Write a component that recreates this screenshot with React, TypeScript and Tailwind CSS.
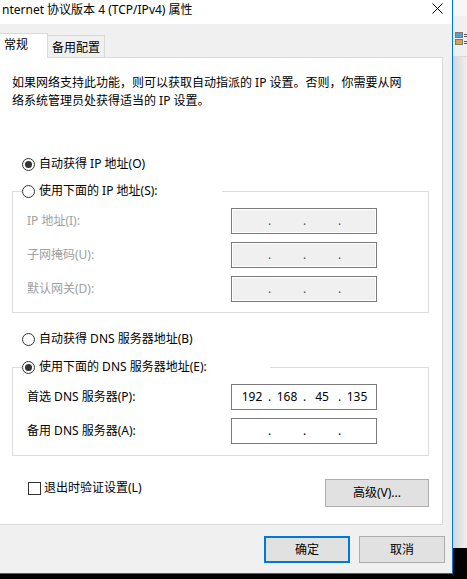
import React from 'react';

type RadioProps = { checked?: boolean; label: string };

function Radio({ checked, label }: RadioProps) {
  return (
    <span className="flex items-center h-4 leading-4">
      <span className="flex items-center justify-center w-[13px] h-[13px] shrink-0 rounded-full border border-[#333333] bg-white">
        {checked && <span className="w-[7px] h-[7px] rounded-full bg-[#333333]" />}
      </span>
      <span className="ml-1 whitespace-nowrap">{label}</span>
    </span>
  );
}

function IpBox({ parts, disabled }: { parts?: string[]; disabled?: boolean }) {
  const segs = parts ?? ['', '', '', ''];
  return (
    <div
      className={
        disabled
          ? 'flex items-center w-[146px] h-[26px] pl-[4px] border border-[#7a7a7a] bg-[#f0f0f0] shadow-[inset_0_0_0_1px_#ffffff] text-[#555555]'
          : 'flex items-center w-[146px] h-[26px] pl-[4px] border border-[#7a7a7a] bg-white text-black'
      }
    >
      {segs.map((s, i) => (
        <React.Fragment key={i}>
          {i > 0 && <span className="flex justify-center w-[3px]">.</span>}
          <span className="w-[32px] text-center">{s}</span>
        </React.Fragment>
      ))}
    </div>
  );
}

function FieldRow({ label, disabled, parts }: { label: string; disabled?: boolean; parts?: string[] }) {
  return (
    <div className="flex items-center pl-[14px]">
      <span className={disabled ? 'w-[204px] text-[#a0a0a0]' : 'w-[204px] text-black'}>{label}</span>
      <IpBox parts={parts} disabled={disabled} />
    </div>
  );
}

export default function App() {
  return (
    <div className="flex items-start w-[467px] h-[579px] overflow-hidden bg-black font-['Noto_Sans','Noto_Sans_CJK_SC',sans-serif] text-[12px] leading-4 text-black">
      {/* Dialog */}
      <div className="flex flex-col w-[453px] h-[574px] shrink-0 border-r border-b border-[#0078d7] bg-[#f0f0f0]">
        {/* Title bar */}
        <div className="flex items-start h-[24px] bg-white">
          <span className="pl-[2px] pt-[2px] whitespace-nowrap">nternet 协议版本 4 (TCP/IPv4) 属性</span>
          <svg className="ml-auto mr-[9px] mt-[3px]" width="11" height="11" viewBox="0 0 11 11">
            <path d="M0.5 0.5 L10.5 10.5 M10.5 0.5 L0.5 10.5" stroke="#000" strokeWidth="1" fill="none" />
          </svg>
        </div>

        {/* Tabs */}
        <div className="flex items-end h-[33px]">
          <div className="relative z-10 -mb-px w-[48px] h-[25px] pl-[4px] pt-[3px] border-t border-r border-[#d9d9d9] bg-white">
            常规
          </div>
          <div className="w-[57px] h-[22px] pl-[4px] pt-[4px] border-t border-r border-[#d9d9d9] bg-[#f0f0f0]">
            备用配置
          </div>
        </div>

        {/* Panel */}
        <div className="flex flex-col w-[443px] border-t border-r border-b border-[#d9d9d9] bg-white pb-[17px]">
          <p className="ml-[12px] mt-[16px] leading-[18px] whitespace-nowrap">
            如果网络支持此功能，则可以获取自动指派的 IP 设置。否则，你需要从网
            <br />
            络系统管理员处获得适当的 IP 设置。
          </p>

          <div className="ml-[22px] mt-[46px]">
            <Radio checked label="自动获得 IP 地址(O)" />
          </div>

          <fieldset className="ml-[12px] mt-[11px] w-[417px] min-w-0 border border-[#dcdcdc] pt-[9px] pb-[10px]">
            <legend className="ml-[9px] w-[200px]">
              <Radio label="使用下面的 IP 地址(S):" />
            </legend>
            <div className="flex flex-col gap-2">
              <FieldRow label="IP 地址(I):" disabled />
              <FieldRow label="子网掩码(U):" disabled />
              <FieldRow label="默认网关(D):" disabled />
            </div>
          </fieldset>

          <div className="ml-[22px] mt-[18px]">
            <Radio label="自动获得 DNS 服务器地址(B)" />
          </div>

          <fieldset className="ml-[12px] mt-[12px] w-[417px] min-w-0 border border-[#dcdcdc] pt-[9px] pb-[11px]">
            <legend className="ml-[9px] w-[248px]">
              <Radio checked label="使用下面的 DNS 服务器地址(E):" />
            </legend>
            <div className="flex flex-col gap-2">
              <FieldRow label="首选 DNS 服务器(P):" parts={['192', '168', '45', '135']} />
              <FieldRow label="备用 DNS 服务器(A):" />
            </div>
          </fieldset>

          <div className="flex items-start justify-between mt-[23px] pl-[28px] pr-[13px]">
            <label className="flex items-center h-4 mt-px">
              <span className="w-[13px] h-[13px] border border-[#333333] bg-white" />
              <span className="ml-[3px] whitespace-nowrap">退出时验证设置(L)</span>
            </label>
            <button className="flex items-center justify-center w-[104px] h-[28px] border border-[#adadad] bg-[#e1e1e1]">
              高级(V)...
            </button>
          </div>
        </div>

        {/* Footer buttons */}
        <div className="flex justify-end gap-[9px] mt-[11px] pr-[7px]">
          <button className="flex items-center justify-center w-[86px] h-[27px] border-2 border-[#0078d7] bg-[#e1e1e1]">
            确定
          </button>
          <button className="flex items-center justify-center w-[86px] h-[27px] border border-[#adadad] bg-[#e1e1e1]">
            取消
          </button>
        </div>
      </div>

      {/* Window behind, peeking on the right */}
      <div className="flex flex-col w-[14px] h-[548px] shrink-0">
        <div className="h-[16px] bg-[#f7f7f7]" />
        <div className="flex flex-col gap-[1px] h-[41px] pt-[16px] pl-[2px] border-b border-[#dadada] bg-[#f0f0f0]">
          <div className="flex items-center gap-[1px]">
            <span className="w-[8px] h-[6px] border border-[#7a7a7a] bg-[#5a9bd5]" />
            <span className="w-[3px] h-[3px] border-y border-[#555555]" />
          </div>
          <div className="flex items-center gap-[1px]">
            <span className="w-[8px] h-[6px] border border-[#7a7a7a] bg-[#d9a441]" />
            <span className="w-[3px] h-[3px] border-y border-[#555555]" />
          </div>
        </div>
        <div className="flex-1 bg-gradient-to-r from-[#d6d6d6] to-[#f0f0f0]" />
      </div>
    </div>
  );
}
